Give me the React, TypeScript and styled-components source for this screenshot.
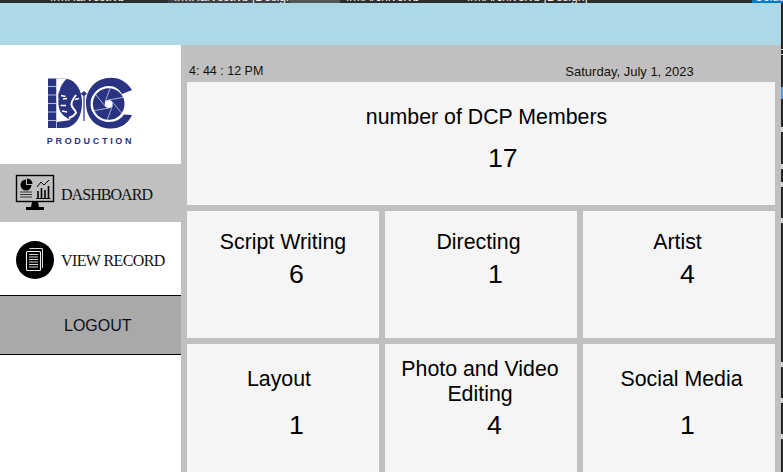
import React from "react";
import styled, { createGlobalStyle } from "styled-components";

const Global = createGlobalStyle`
  html, body { margin: 0; padding: 0; background: #2d2d30; overflow: hidden; }
  body { font-family: "Liberation Sans", Arial, sans-serif; color: #000; }
  * { box-sizing: border-box; }
`;

const Page = styled.div`
  width: 783px;
  height: 472px;
  display: grid;
  grid-template-rows: 3px 1fr;
  grid-template-columns: 781px 2px;
  overflow: hidden;
`;

const TabStrip = styled.div`
  grid-column: 1 / 3;
  display: flex;
  background: #2d2d30;
  overflow: hidden;
  height: 3px;
`;

const Tab = styled.span<{ $width: number; $pad: number; $bg?: string }>`
  flex: 0 0 ${(p) => p.$width}px;
  padding-left: ${(p) => p.$pad}px;
  background: ${(p) => p.$bg ?? "transparent"};
  color: #f1f1f1;
  font: 12px/12px "Liberation Sans", sans-serif;
  white-space: nowrap;
  margin-top: -9px;
  height: 12px;
  overflow: hidden;
`;

const AppWindow = styled.div`
  display: grid;
  grid-template-rows: 42px 1fr;
  grid-template-columns: 181px 1fr;
  min-height: 0;
`;

const EdgeStrip = styled.div`
  background: #252526;
  position: relative;
  display: flex;
  flex-direction: column;
`;

const EdgeMark = styled.span<{ $top: number; $color?: string; $h?: number }>`
  position: absolute;
  left: 0;
  top: ${(p) => p.$top}px;
  width: 2px;
  height: ${(p) => p.$h ?? 5}px;
  background: ${(p) => p.$color ?? "#d8d8d8"};
`;

const HeaderBar = styled.div`
  grid-column: 1 / 3;
  background: #add8e6;
`;

const Sidebar = styled.aside`
  background: #fff;
  display: flex;
  flex-direction: column;
`;

const LogoBox = styled.div`
  height: 119px;
  display: flex;
  flex-direction: column;
  align-items: center;
  padding-top: 30px;
`;

const LogoCaption = styled.div`
  font: bold 9px/10px "Liberation Sans", sans-serif;
  letter-spacing: 2.7px;
  color: #2a3282;
  margin-top: 3px;
  white-space: nowrap;
`;

const NavItem = styled.div<{ $height: number; $bg: string; $pad: number; $top?: number }>`
  height: ${(p) => p.$height}px;
  background: ${(p) => p.$bg};
  display: grid;
  grid-template-columns: 39px 1fr;
  align-items: center;
  padding-left: ${(p) => p.$pad}px;
  padding-top: ${(p) => p.$top ?? 0}px;
  column-gap: ${(p) => 22 - p.$pad}px;
`;

const NavLabel = styled.span<{ $track: number; $drop: number }>`
  font: 16px/18px "Liberation Serif", serif;
  letter-spacing: ${(p) => p.$track}px;
  margin-top: ${(p) => p.$drop}px;
  color: #111;
  white-space: nowrap;
`;

const LogoutButton = styled.div`
  height: 60px;
  background: #a9a9a9;
  border-top: 1px solid #000;
  border-bottom: 1px solid #000;
  padding: 2px 0 0 64px;
  display: flex;
  align-items: center;
  font-size: 16px;
  color: #0a0f1e;
`;

const Main = styled.main`
  background: #c0c0c0;
  padding: 0 6px 0 6px;
  display: flex;
  flex-direction: column;
  min-height: 0;
`;

const ClockRow = styled.div`
  height: 37px;
  display: flex;
  align-items: flex-end;
  font-size: 12.5px;
  line-height: 15px;
  color: #111;
  padding: 0 0 3px 2px;
`;

const ClockDate = styled.span`
  margin-left: 302px;
  font-size: 13px;
`;

const Board = styled.div`
  display: grid;
  grid-template-columns: repeat(3, 192px);
  grid-template-rows: 123px 127px 128px;
  gap: 6px;
`;

const Card = styled.section<{ $wide?: boolean; $pad: number }>`
  background: #f5f5f5;
  grid-column: ${(p) => (p.$wide ? "1 / 4" : "auto")};
  padding-top: ${(p) => p.$pad}px;
  display: flex;
  flex-direction: column;
`;

const Title = styled.div<{ $nudge?: number }>`
  font-size: 21.33px;
  line-height: 25px;
  text-align: center;
  padding-left: ${(p) => Math.max(0, p.$nudge ?? 0)}px;
  padding-right: ${(p) => Math.max(0, -(p.$nudge ?? 0))}px;
`;

const Value = styled.div<{ $x: number; $gap: number }>`
  font-size: 26.67px;
  line-height: 30px;
  padding-left: ${(p) => p.$x}px;
  margin-top: ${(p) => p.$gap}px;
`;

const cx = 62.7;
const cy = 29;
const blades = [20, 80, 140, 200, 260, 320]
  .map((deg) => {
    const a = (deg * Math.PI) / 180;
    const x = cx + 4 * Math.cos(a);
    const y = cy + 4 * Math.sin(a);
    const ex = x - 15.2 * Math.sin(a);
    const ey = y + 15.2 * Math.cos(a);
    return `M${x.toFixed(1)} ${y.toFixed(1)}L${ex.toFixed(1)} ${ey.toFixed(1)}`;
  })
  .join("");

const DcLogo = () => (
  <svg width="90" height="58" viewBox="0 0 90 58" aria-hidden="true">
    <g fill="#2a3282">
      <path d="M2 3.5H17C29 3.5 36 14 36 28C36 42 29 53 17 53H2Z" />
      <path d="M86 15C81 7 74 2.7 65 2.7C50 2.7 40 14 40 28C40 43 50 53.5 65 53.5C74 53.5 82 49 86 40L78 39.5C75 44 70 47 63 47C53 47 44.5 39 44.5 29C44.5 19 53 11 63 11C69 11 73 14 76 19Z" />
      <circle cx={cx} cy={cy} r="15.8" />
    </g>
    <path d="M10.5 3.5H21C17 7 14.5 11 13.5 16C12 19 12 21 12.5 24C12 28 12.5 32 14 36C16 40 20 43 25 45L10.5 47Z" fill="#fff" />
    <path d="M10.5 3.5V53M2 11.5H10.5M2 20H10.5M2 28.5H10.5M2 37H10.5M2 45.5H10.5" stroke="#d8dbea" strokeWidth=".8" fill="none" />
    <path d="M30 20C27 24 25 27 25.5 30C26 33 30 35 30 38C28 41 26 42 23 43" stroke="#fff" strokeWidth="2" fill="none" />
    <path d="M15 20.5L19.5 21.5M17 24L21 23.5M14.5 30.5H20M29 24.5L33 23.5M16 36L21 37" stroke="#fff" strokeWidth="1.4" fill="none" />
    <path d="M38 17V46" stroke="#2a3282" strokeWidth="1.2" fill="none" />
    <path d="M34.5 19L38 16L41 19L38 21Z" fill="#2a3282" />
    <circle cx={cx} cy={cy} r="3.9" fill="#fff" />
    <path d={blades} stroke="#e4e6f2" strokeWidth=".7" fill="none" />
  </svg>
);

const DashboardIcon = () => (
  <svg width="40" height="38" viewBox="0 0 40 38" aria-hidden="true">
    <rect x="1.5" y="1.5" width="37" height="26" fill="none" stroke="#000" strokeWidth="1.4" />
    <path d="M17 28H23L24 33H16Z" fill="#000" />
    <rect x="11" y="33" width="18" height="3" fill="#000" />
    <path d="M11 5.5A5.5 5.5 0 1 0 16.5 11H11Z" fill="#000" />
    <path d="M12 4.5A5.5 5.5 0 0 1 17.5 10H12Z" fill="#000" />
    <path d="M5 18H17M5 20.5H17M5 23H17" stroke="#333" strokeWidth="1" />
    <path d="M22 13L26 8L29 11L34 6" fill="none" stroke="#000" strokeWidth="1" />
    <path d="M23 24V17M26.5 24V14M30 24V16M33.5 24V12" stroke="#000" strokeWidth="1.6" />
    <path d="M21 24.5H35.5" stroke="#000" strokeWidth="1" />
  </svg>
);

const RecordIcon = () => (
  <svg width="38" height="38" viewBox="0 0 38 38" aria-hidden="true">
    <circle cx="19" cy="19" r="19" fill="#000" />
    <path d="M13.5 7.5H26.5V27" fill="none" stroke="#ddd" strokeWidth="1" />
    <rect x="10.5" y="10.5" width="14" height="19" rx="1" fill="#000" stroke="#eee" strokeWidth="1.1" />
    <path d="M13 13.5H22M13 16H22M13 18.5H22M13 21H22M13 23.5H22M13 26H22" stroke="#d5d5d5" strokeWidth="1.2" />
  </svg>
);

export default function App() {
  return (
    <>
      <Global />
      <Page>
        <TabStrip>
          <Tab $width={168} $pad={50}>frmHarvest.vb</Tab>
          <Tab $width={122} $pad={6} $bg="#3f3f46">frmHarvest.vb [Design]</Tab>
          <Tab $width={50} $bg="#55555a" $pad={0} />
          <Tab $width={121} $pad={6}>frmArchive.vb</Tab>
          <Tab $width={291} $pad={6}>frmArchive.vb [Design]</Tab>
          <Tab $width={31} $pad={3} $bg="#007acc">Solution</Tab>
        </TabStrip>
        <AppWindow>
          <HeaderBar />
          <Sidebar>
            <LogoBox>
              <DcLogo />
              <LogoCaption>PRODUCTION</LogoCaption>
            </LogoBox>
            <NavItem $height={58} $bg="#c0c0c0" $pad={15}>
              <DashboardIcon />
              <NavLabel $track={-0.95} $drop={4}>DASHBOARD</NavLabel>
            </NavItem>
            <NavItem $height={73} $bg="#fff" $pad={16} $top={2}>
              <RecordIcon />
              <NavLabel $track={-0.6} $drop={2}>VIEW RECORD</NavLabel>
            </NavItem>
            <LogoutButton>LOGOUT</LogoutButton>
          </Sidebar>
          <Main>
            <ClockRow>
              <span>4: 44 : 12 PM</span>
              <ClockDate>Saturday, July 1, 2023</ClockDate>
            </ClockRow>
            <Board>
              <Card $wide $pad={23}>
                <Title $nudge={11}>number of DCP Members</Title>
                <Value $x={301} $gap={13}>17</Value>
              </Card>
              <Card $pad={19}>
                <Title>Script Writing</Title>
                <Value $x={102} $gap={4}>6</Value>
              </Card>
              <Card $pad={19}>
                <Title $nudge={-5}>Directing</Title>
                <Value $x={103} $gap={4}>1</Value>
              </Card>
              <Card $pad={19}>
                <Title $nudge={-3}>Artist</Title>
                <Value $x={97} $gap={4}>4</Value>
              </Card>
              <Card $pad={23}>
                <Title $nudge={-8}>Layout</Title>
                <Value $x={102} $gap={18}>1</Value>
              </Card>
              <Card $pad={13}>
                <Title $nudge={-2}>Photo and Video Editing</Title>
                <Value $x={102} $gap={3}>4</Value>
              </Card>
              <Card $pad={23}>
                <Title $nudge={5}>Social Media</Title>
                <Value $x={97} $gap={18}>1</Value>
              </Card>
            </Board>
          </Main>
        </AppWindow>
        <EdgeStrip>
          <EdgeMark $top={46} $h={1} />
          <EdgeMark $top={51} $h={1} />
          <EdgeMark $top={84} $h={12} $color="#5a9bd5" />
          <EdgeMark $top={124} />
          <EdgeMark $top={161} />
          <EdgeMark $top={179} />
          <EdgeMark $top={215} />
          <EdgeMark $top={359} />
          <EdgeMark $top={395} />
          <EdgeMark $top={431} />
        </EdgeStrip>
      </Page>
    </>
  );
}
